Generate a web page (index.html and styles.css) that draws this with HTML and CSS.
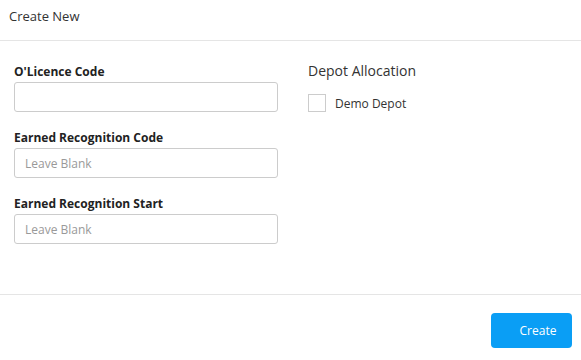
FILE: index.html
```html
<!DOCTYPE html>
<html>
<head>
    <title>Create New</title>
    <meta charset="UTF-8">
    <meta name="viewport" content="width=device-width, initial-scale=1.0">
    <link rel="stylesheet" href="styles.css">
</head>
<body>
    <div class="modal">
        <div class="modal-header">
            <h4 class="modal-title">Create New</h4>
        </div>

        <div class="modal-body">
            <div class="col">
                <div class="form-group">
                    <label class="form-label">O'Licence Code</label>
                    <input class="form-input" type="text">
                </div>
                <div class="form-group">
                    <label class="form-label">Earned Recognition Code</label>
                    <input class="form-input" type="text" placeholder="Leave Blank">
                </div>
                <div class="form-group">
                    <label class="form-label">Earned Recognition Start</label>
                    <input class="form-input" type="text" placeholder="Leave Blank">
                </div>
            </div>
            <div class="col col-right">
                <h5 class="section-title">Depot Allocation</h5>
                <label class="check-row">
                    <span class="check-box"></span>
                    <span class="check-label">Demo Depot</span>
                </label>
            </div>
        </div>

        <div class="modal-footer">
            <button class="create-btn">Create</button>
        </div>
    </div>
</body>
</html>
```

FILE: styles.css
```css
body {
    font-family: 'Open Sans', 'Segoe UI', sans-serif;
    margin: 0;
    background-color: white;
    color: #333;
}

.modal {
    width: 581px;
    height: 360px;
}

.modal-header {
    height: 41px;
    border-bottom: 1px solid #e5e5e5;
    box-sizing: border-box;
    padding: 6px 9px;
}

.modal-title {
    margin: 0;
    font-size: 13px;
    font-weight: 400;
    line-height: 20px;
    color: #333;
}

.modal-body {
    display: grid;
    grid-template-columns: 277px 1fr;
    height: 254px;
    box-sizing: border-box;
    padding: 23px 0 0 14px;
    border-bottom: 1px solid #e5e5e5;
}

.col-right {
    padding-left: 17px;
    margin-top: -1px;
}

.form-group {
    display: flex;
    flex-direction: column;
    margin-bottom: 18px;
}

.form-label {
    font-size: 12px;
    font-weight: 700;
    line-height: 16px;
    color: #222;
    margin-bottom: 2px;
}

.form-input {
    width: 264px;
    height: 30px;
    box-sizing: border-box;
    border: 1px solid #ccc;
    border-radius: 3px;
    padding: 0 10px;
    font-family: inherit;
    font-size: 12px;
    color: #555;
}

.form-input::placeholder {
    color: #999;
}

.section-title {
    margin: 0;
    font-size: 14px;
    font-weight: 400;
    line-height: 16px;
    color: #333;
}

.check-row {
    display: flex;
    align-items: center;
    margin-top: 15px;
}

.check-box {
    width: 18px;
    height: 18px;
    box-sizing: border-box;
    border: 1px solid #ccc;
    background-color: white;
}

.check-label {
    margin-left: 9px;
    font-size: 12px;
    color: #333;
}

.modal-footer {
    display: flex;
    justify-content: flex-end;
    padding: 18px 9px 0 0;
}

.create-btn {
    width: 81px;
    height: 35px;
    background-color: #0a9ef5;
    color: white;
    border: none;
    border-radius: 4px;
    font-family: inherit;
    font-size: 12px;
    padding: 0 0 0 13px;
    cursor: pointer;
}
```
